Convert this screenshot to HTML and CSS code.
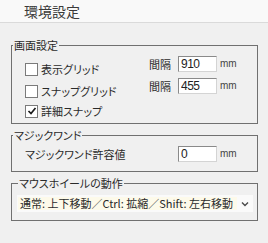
FILE: index.html
```html
<!DOCTYPE html>
<html>
  <head>
    <title>環境設定</title>
    <link rel="stylesheet" href="styles.css">
  </head>
  <body>
    <div class="kopbalk">環境設定</div>

    <fieldset class="groep groep-eerste">
      <legend>画面設定</legend>
      <div class="rij">
        <label class="vinkje"><span class="vak"></span>表示グリッド</label>
        <span class="label-rechts">間隔</span>
        <input type="text" class="veld" value="910" />
        <span class="eenheid">mm</span>
      </div>
      <div class="rij rij-tweede">
        <label class="vinkje"><span class="vak"></span>スナップグリッド</label>
        <span class="label-rechts">間隔</span>
        <input type="text" class="veld" value="455" />
        <span class="eenheid">mm</span>
      </div>
      <div class="rij rij-derde">
        <label class="vinkje">
          <span class="vak">
            <svg width="10" height="10" viewBox="0 0 10 10"><path d="M1.5 5 L4 7.5 L8.5 2" fill="none" stroke="#1a1a1a" stroke-width="1.7"/></svg>
          </span>詳細スナップ
        </label>
      </div>
    </fieldset>

    <fieldset class="groep groep-tweede">
      <legend>マジックワンド</legend>
      <div class="rij rij-wand">
        <span class="label-wand">マジックワンド許容値</span>
        <input type="text" class="veld" value="0" />
        <span class="eenheid">mm</span>
      </div>
    </fieldset>

    <fieldset class="groep groep-derde">
      <legend>マウスホイールの動作</legend>
      <div class="keuzelijst">
        <span class="keuze-tekst">通常: 上下移動／Ctrl: 拡縮／Shift: 左右移動</span>
        <span class="keuze-pijl">
          <svg width="8" height="6" viewBox="0 0 8 6"><path d="M1 1.5 L4 4.5 L7 1.5" fill="none" stroke="#4a4a4a" stroke-width="1.4"/></svg>
        </span>
      </div>
    </fieldset>
  </body>
</html>
```

FILE: styles.css
```css
body {
  margin: 0;
  width: 268px;
  height: 243px;
  background-color: #f0f0f0;
  font-family: "Noto Sans CJK JP", "Noto Sans", sans-serif;
  font-size: 11px;
  color: #2a2a2a;
  font-feature-settings: "palt";
}
.kopbalk {
  height: 22px;
  line-height: 22px;
  padding-left: 24px;
  font-size: 14px;
  color: #3a3a3a;
  background-color: #f9f9f9;
  border-bottom: 1px solid #dadada;
}
.groep {
  margin: 4px 10px 0 11px;
  padding: 0;
  min-width: 0;
  border: 1px solid #707070;
}
.groep legend {
  padding: 0 1px;
  margin-left: 1px;
  line-height: 14px;
  font-size: 11px;
}
.groep-eerste {
  margin-top: 15px;
  padding: 4px 0 4px 0;
}
.rij {
  display: grid;
  grid-template-columns: 124px 29px 39px auto;
  align-items: center;
  height: 22px;
  padding-left: 13px;
}
.rij-tweede {
  height: 20px;
}
.rij-derde {
  height: 21px;
}
.vinkje {
  display: flex;
  align-items: center;
  gap: 3px;
  align-self: start;
  margin-top: 6px;
  height: 14px;
}
.vak {
  width: 11px;
  height: 11px;
  border: 1px solid #7a7a7a;
  background-color: white;
  display: flex;
  align-items: center;
  justify-content: center;
}
.label-rechts {
  align-self: start;
  margin-top: 1px;
  line-height: 14px;
}
.veld {
  align-self: start;
  box-sizing: border-box;
  width: 39px;
  height: 16px;
  margin: 0;
  padding: 0 2px;
  border: 1px solid;
  border-color: #8a8a8a #d4d4d4 #d4d4d4 #8a8a8a;
  background-color: white;
  font-family: "Liberation Sans", sans-serif;
  font-size: 12px;
  letter-spacing: -0.5px;
  color: #222;
  outline: none;
}
.eenheid {
  align-self: start;
  padding-left: 3px;
  margin-top: 2px;
  font-family: "Liberation Sans", sans-serif;
  font-size: 10px;
  color: #444;
}
.groep-tweede {
  padding: 4px 0 9px 0;
}
.rij-wand {
  grid-template-columns: 153px 39px auto;
  height: 16px;
}
.label-wand {
  line-height: 14px;
}
.groep-derde {
  padding: 5px 4px 8px 5px;
}
.keuzelijst {
  display: flex;
  align-items: center;
  height: 17px;
  background-color: #fafafa;
}
.keuze-tekst {
  flex: 1;
  height: 13px;
  line-height: 13px;
  margin-left: 1px;
  padding-left: 2px;
  background-color: #fdfaea;
  white-space: nowrap;
}
.keuze-pijl {
  width: 16px;
  display: flex;
  justify-content: center;
}
```
